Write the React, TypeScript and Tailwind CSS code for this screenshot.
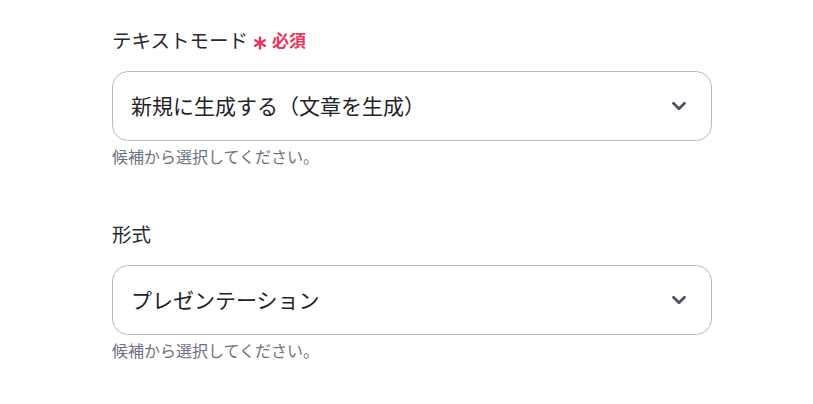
import { ChevronDown } from "lucide-react";

const font = { fontFamily: '"Noto Sans CJK JP", "Noto Sans", sans-serif' };

function Asterisk() {
  return (
    <svg width="14" height="14" viewBox="0 0 14 14" className="mt-[6px]">
      <g stroke="#e8345f" strokeWidth="2.4" strokeLinecap="round">
        <line x1="7" y1="1.5" x2="7" y2="12.5" />
        <line x1="2.2" y1="4.2" x2="11.8" y2="9.8" />
        <line x1="2.2" y1="9.8" x2="11.8" y2="4.2" />
      </g>
    </svg>
  );
}

function Field({ label, value, required }: { label: string; value: string; required?: boolean }) {
  return (
    <div className="flex flex-col">
      <div className="flex items-center h-[26px] gap-[5px]">
        <span className="text-[19.5px] leading-[26px] text-[#262a33]">{label}</span>
        {required && (
          <span className="flex items-center gap-[5px] text-[#e8345f] font-bold text-[17px] leading-[24px]">
            <Asterisk />
            必須
          </span>
        )}
      </div>
      <div className="mt-[18px] h-[70px] w-[600px] rounded-[16px] border border-[#b4bcc8] bg-white flex items-center justify-between pl-[18px] pr-[21px]">
        <span className="text-[21px] text-[#1f2328]">{value}</span>
        <ChevronDown className="w-[22px] h-[22px] text-[#4b5260]" strokeWidth={3} />
      </div>
      <div className="mt-[4px] text-[16px] leading-[22px] text-[#6b7280]">候補から選択してください。</div>
    </div>
  );
}

export default function App() {
  return (
    <div className="w-[813px] h-[404px] bg-white pl-[112px] pt-[27px]" style={font}>
      <div className="flex flex-col gap-[54px]">
        <Field label="テキストモード" value="新規に生成する（文章を生成）" required />
        <Field label="形式" value="プレゼンテーション" />
      </div>
    </div>
  );
}
